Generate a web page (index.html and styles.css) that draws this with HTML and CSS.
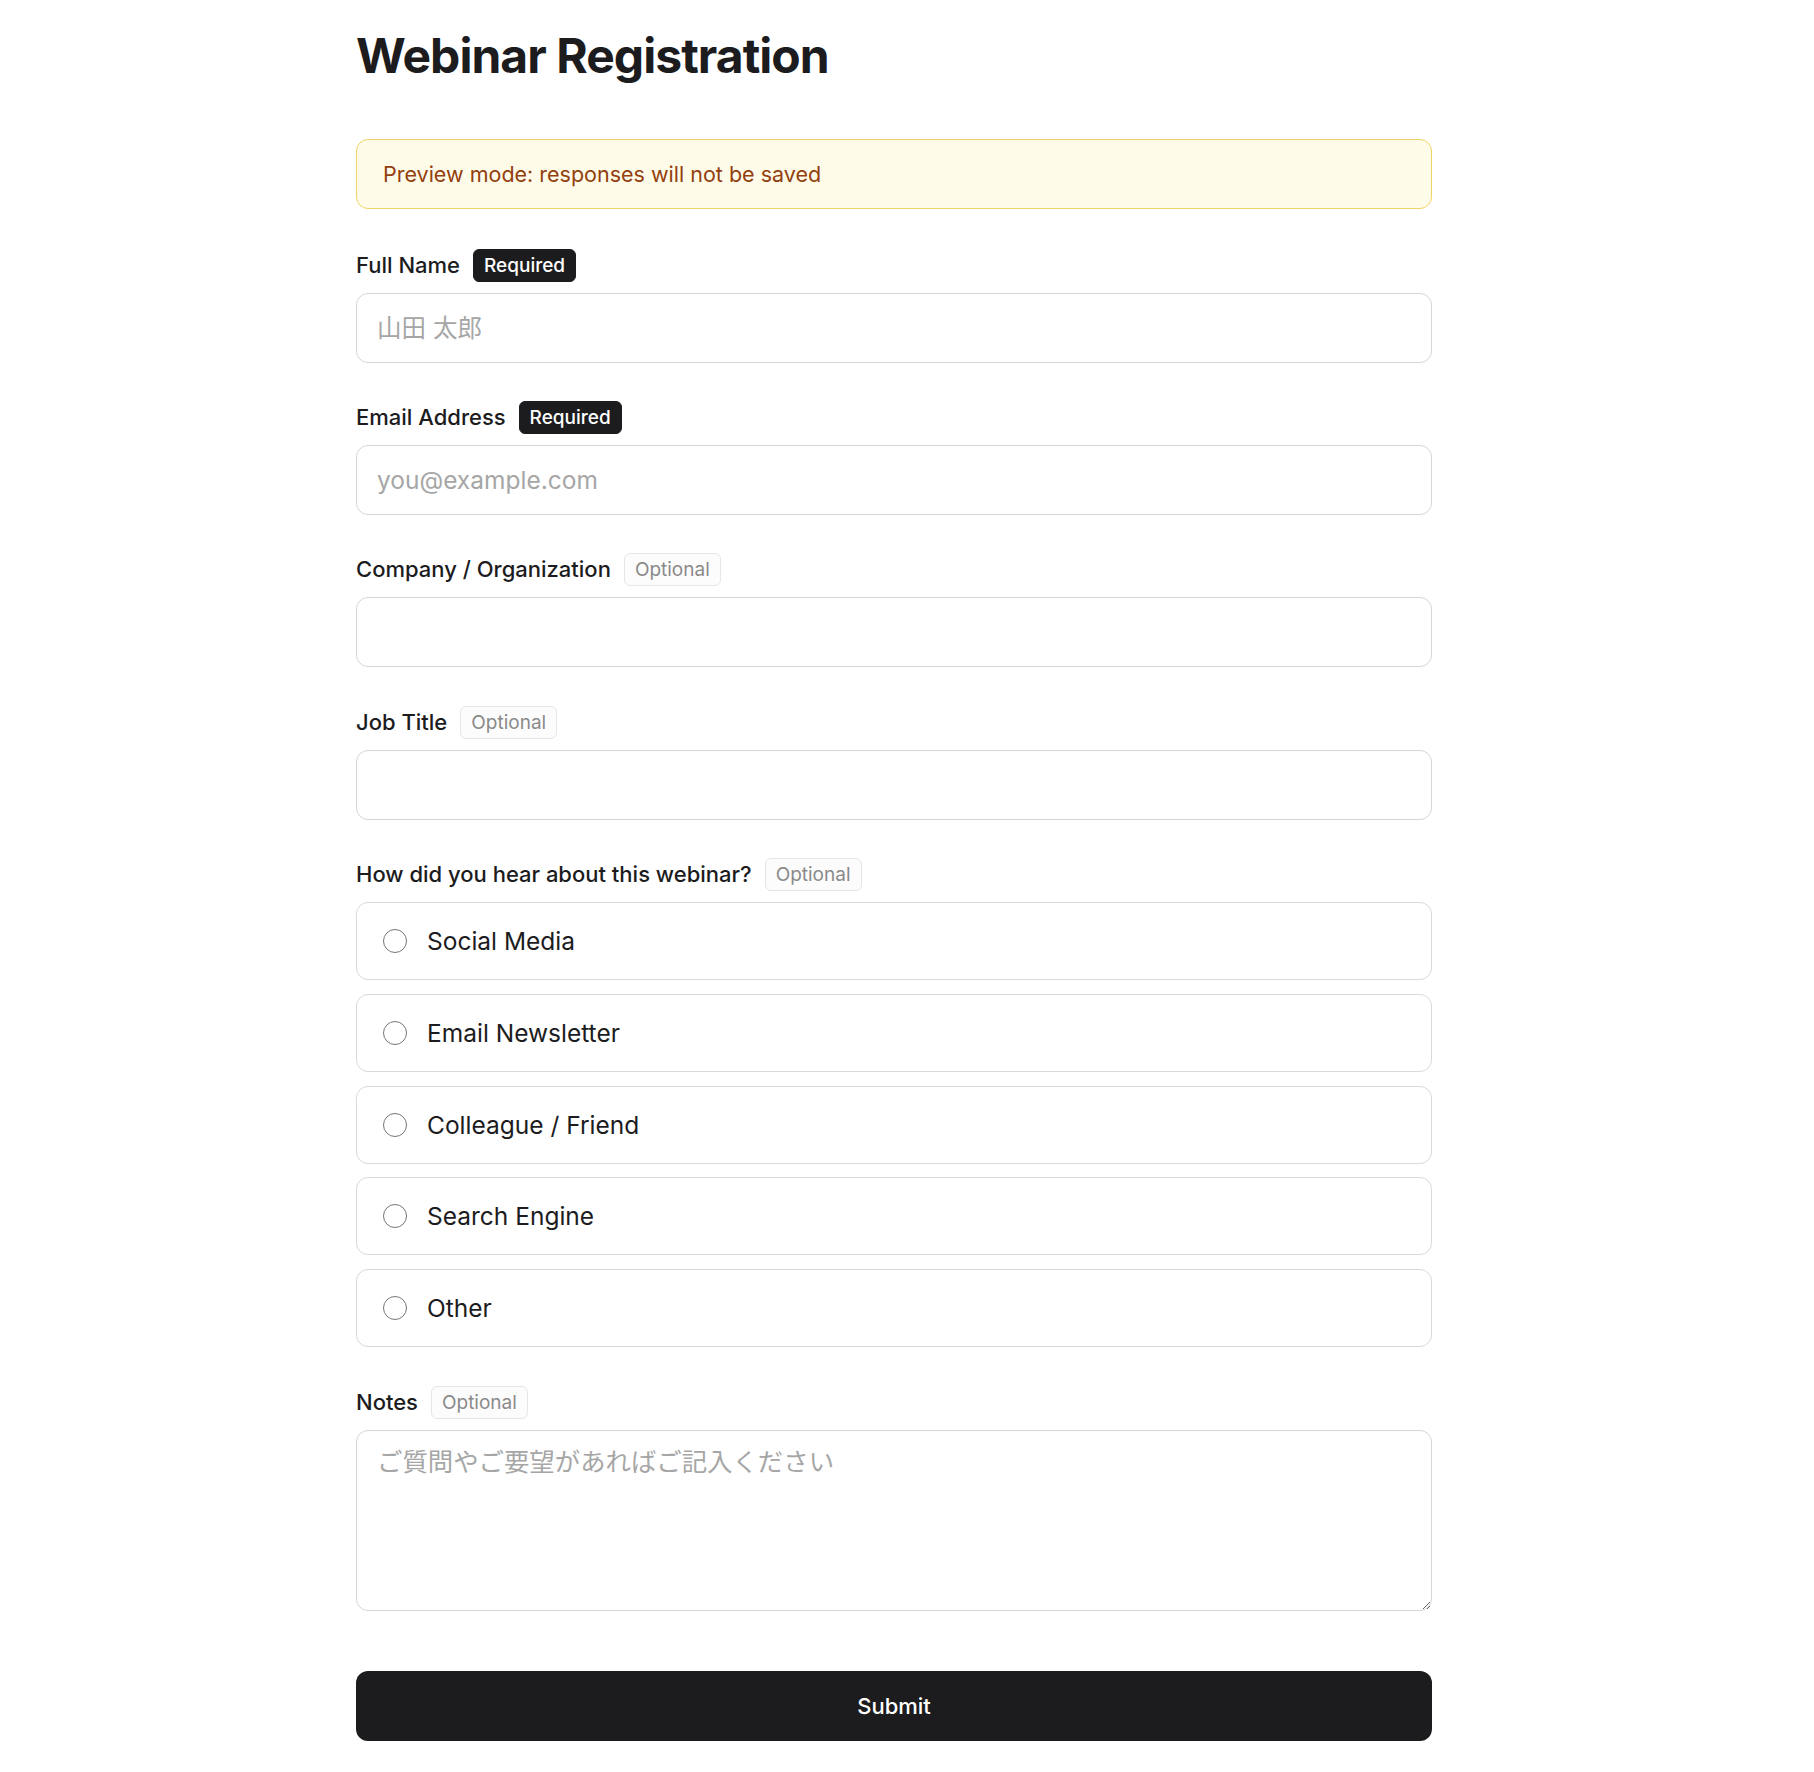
FILE: index.html
```html
<!DOCTYPE html>
<html lang="ja">
<head>
<meta charset="utf-8">
<title>Webinar Registration</title>
<link rel="stylesheet" href="styles.css">
</head>
<body>
<main class="page">
  <h1 class="title">Webinar Registration</h1>
  <div class="notice">Preview mode: responses will not be saved</div>
  <form class="form">
    <div class="field">
      <div class="label-row"><label class="label" for="name">Full Name</label><span class="badge badge-required">Required</span></div>
      <input class="input" id="name" type="text" placeholder="山田 太郎">
    </div>
    <div class="field">
      <div class="label-row"><label class="label" for="email">Email Address</label><span class="badge badge-required">Required</span></div>
      <input class="input" id="email" type="email" placeholder="you@example.com">
    </div>
    <div class="field">
      <div class="label-row"><label class="label" for="company">Company / Organization</label><span class="badge badge-optional">Optional</span></div>
      <input class="input" id="company" type="text">
    </div>
    <div class="field">
      <div class="label-row"><label class="label" for="job">Job Title</label><span class="badge badge-optional">Optional</span></div>
      <input class="input" id="job" type="text">
    </div>
    <div class="field">
      <div class="label-row"><span class="label">How did you hear about this webinar?</span><span class="badge badge-optional">Optional</span></div>
      <div class="options">
        <label class="option"><span class="radio"></span><span class="option-text">Social Media</span></label>
        <label class="option"><span class="radio"></span><span class="option-text">Email Newsletter</span></label>
        <label class="option"><span class="radio"></span><span class="option-text">Colleague / Friend</span></label>
        <label class="option"><span class="radio"></span><span class="option-text">Search Engine</span></label>
        <label class="option"><span class="radio"></span><span class="option-text">Other</span></label>
      </div>
    </div>
    <div class="field">
      <div class="label-row"><label class="label" for="notes">Notes</label><span class="badge badge-optional">Optional</span></div>
      <textarea class="input textarea" id="notes" placeholder="ご質問やご要望があればご記入ください"></textarea>
    </div>
    <button class="submit" type="button">Submit</button>
  </form>
</main>
</body>
</html>
```
FILE: styles.css
```css
* { box-sizing: border-box; }
html, body { margin: 0; background: #ffffff; }
body {
  font-family: Inter, "Noto Sans CJK JP", "Liberation Sans", sans-serif;
  color: #1c1c1e;
}
.page {
  max-width: 1102px;
  margin: 0 auto;
  padding: 27px 26px 40px 0;
}
.title {
  margin: 0 0 54px;
  font-size: 48px;
  line-height: 1.2;
  font-weight: 700;
  letter-spacing: -0.02em;
  color: #1c1c1e;
}
.notice {
  border: 1px solid #f0d564;
  background: #fffbe9;
  border-radius: 12px;
  padding: 18px 26px;
  font-size: 21.5px;
  line-height: 32px;
  color: #92400e;
  margin-bottom: 40px;
}
.form { display: flex; flex-direction: column; gap: 38.4px; }
.field { display: flex; flex-direction: column; gap: 11px; }
.label-row { display: flex; align-items: center; gap: 13px; }
.label { font-size: 22px; font-weight: 500; line-height: 33px; }
.badge {
  display: inline-block;
  height: 33px;
  padding: 0 10px;
  border-radius: 6px;
  font-size: 19px;
  line-height: 31px;
  font-weight: 500;
  border: 1px solid transparent;
}
.badge-required { background: #1c1c1e; color: #ffffff; border-color: #1c1c1e; }
.badge-optional { background: #fcfcfc; color: #8a8a8a; border-color: #e6e6e6; font-weight: 400; }
.input {
  display: block;
  width: 100%;
  height: 70px;
  border: 1px solid #d6d6d6;
  border-radius: 12px;
  padding: 0 20px;
  font-family: Inter, "Noto Sans CJK JP", sans-serif;
  font-size: 24.5px;
  color: #1c1c1e;
  background: #fff;
  outline: none;
}
.input::placeholder { color: #a6a6a6; }
.textarea {
  height: 181px;
  padding: 14px 20px;
  font-size: 25.4px;
  line-height: 1.35;
  resize: vertical;
}
.options { display: flex; flex-direction: column; gap: 13.75px; }
.option {
  display: flex;
  align-items: center;
  gap: 20px;
  height: 78px;
  padding: 0 26px;
  border: 1px solid #d9d9d9;
  border-radius: 12px;
}
.radio {
  width: 24px;
  height: 24px;
  border-radius: 50%;
  border: 1.5px solid #757575;
  flex: none;
}
.option-text { font-size: 24.5px; color: #1c1c1e; }
.submit {
  margin-top: 22px;
  height: 70px;
  width: 100%;
  border: none;
  border-radius: 12px;
  background: #1c1c1e;
  color: #fff;
  font-family: Inter, sans-serif;
  font-size: 22px;
  font-weight: 500;
}
```
